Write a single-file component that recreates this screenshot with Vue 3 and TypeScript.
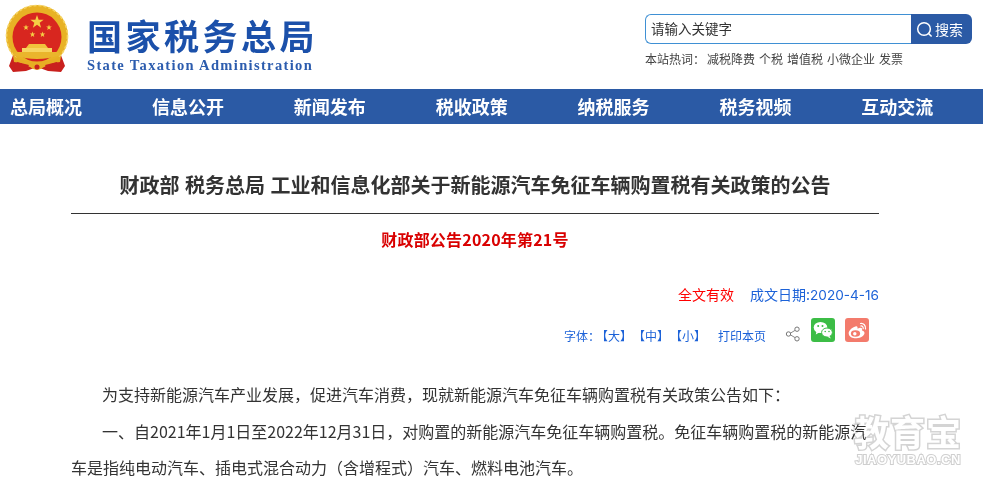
<template>
  <div class="page">
    <header class="head">
      <div class="brand">
        <svg class="emblem" viewBox="0 0 72 74" width="72" height="74">
          <path d="M14 46 L8 62 L12 68 L25 67 L36 63 L47 67 L60 68 L64 62 L58 46 Z" fill="#c9211e" />
          <circle cx="36" cy="32" r="31" fill="#e8b225" />
          <circle cx="36" cy="32" r="30.500" fill="none" stroke="#f6d563" stroke-width="1.600" stroke-dasharray="3 2" />
          <circle cx="36" cy="33" r="24.500" fill="#d8261f" />
          <polygon v-for="(s, i) in stars" :key="i" :points="starPoints(s.x, s.y, s.r)" fill="#f5cf45" />
          <path d="M28 40 h16 l3 4 h-22 Z" fill="#f1c23c" />
          <path d="M21 44 h30 v4 h-30 Z" fill="#f7d560" />
          <path d="M15 48 h42 l3 3 q-24 8 -48 0 Z" fill="#eab52c" />
          <path d="M12 52 q24 12 48 0 l-1 6 q-10 1 -16 5 q-7 6 -14 0 q-6 -4 -16 -5 Z" fill="#e7ae24" />
          <path d="M16 58 L12 67 L25 66 L28 61 Z M56 58 L60 67 L47 66 L44 61 Z" fill="#c9211e" />
          <circle cx="36" cy="63" r="2.500" fill="#c9211e" />
        </svg>
        <div class="brand-text">
          <div class="brand-cn">国家税务总局</div>
          <div class="brand-en">State Taxation Administration</div>
        </div>
      </div>
      <div class="search-wrap">
        <div class="search">
          <div class="search-input">请输入关键字</div>
          <button class="search-btn">
            <svg viewBox="0 0 18 18" width="17" height="17">
              <circle cx="8.500" cy="8.500" r="6.700" fill="none" stroke="#fff" stroke-width="1.600" />
              <path d="M13.300 13.300 L16.500 16.500" stroke="#fff" stroke-width="1.600" />
            </svg>
            <span>搜索</span>
          </button>
        </div>
        <div class="hot">
          <span class="hot-label">本站热词：</span>
          <span v-for="w in hotWords" :key="w" class="hot-word">{{ w }}</span>
        </div>
      </div>
    </header>

    <nav class="nav">
      <a v-for="n in navItems" :key="n" class="nav-item">{{ n }}</a>
    </nav>

    <main class="article">
      <h1 class="title">财政部 税务总局 工业和信息化部关于新能源汽车免征车辆购置税有关政策的公告</h1>
      <div class="doc-no">财政部公告2020年第21号</div>
      <div class="status">
        <span class="valid">全文有效</span>
        <span class="date">成文日期:<span class="date-num">2020-4-16</span></span>
      </div>
      <div class="tools">
        <span class="font-label">字体：</span>
        <span class="sizes"><a>【大】</a><a>【中】</a><a>【小】</a></span>
        <a class="print">打印本页</a>
        <svg class="share" viewBox="0 0 16 16" width="16" height="16">
          <path d="M4 8 L11.500 3.500 M4 8 L11.500 12.500" stroke="#8a8a8a" stroke-width="1" fill="none" />
          <circle cx="3.500" cy="8" r="2.200" fill="#fff" stroke="#777" />
          <circle cx="12" cy="3.200" r="2.200" fill="#fff" stroke="#777" />
          <circle cx="12" cy="12.800" r="2.200" fill="#fff" stroke="#777" />
        </svg>
        <span class="social wechat">
          <svg viewBox="0 0 24 24" width="24" height="24">
            <ellipse cx="9.500" cy="9.500" rx="6.800" ry="5.600" fill="#fff" />
            <path d="M5.500 13 L4.800 16.500 L9 14 Z" fill="#fff" />
            <ellipse cx="16" cy="14.500" rx="5.400" ry="4.500" fill="#fff" stroke="#3cbd46" stroke-width="1" />
            <path d="M18.500 18 L19.800 20.500 L16 18.500 Z" fill="#fff" />
            <circle cx="7.200" cy="8" r="1" fill="#3cbd46" />
            <circle cx="11.500" cy="8" r="1" fill="#3cbd46" />
            <circle cx="14.200" cy="13.500" r="0.800" fill="#3cbd46" />
            <circle cx="18" cy="13.500" r="0.800" fill="#3cbd46" />
          </svg>
        </span>
        <span class="social weibo">
          <svg viewBox="0 0 24 24" width="24" height="24">
            <path d="M10.500 8.500 C6.500 9.500 3.500 13 3.700 15.500 C4 19 8 20.500 11.500 20.300 C16 20 19.500 17.500 19.500 15 C19.500 13.500 18 12.800 17 12.500 C17.500 11 17 9.500 15 9.800 C14 10 13 10.500 12.500 10.800 C12.800 9 12.300 8 10.500 8.500 Z" fill="#fff" />
            <ellipse cx="10.500" cy="15.500" rx="4.600" ry="3.300" fill="#f37b6c" />
            <circle cx="9.800" cy="15.800" r="1.700" fill="#fff" />
            <path d="M15.500 5.500 C18.500 5 21 7.500 20.500 11 M15.800 8 C17.300 7.800 18.500 9 18.200 10.700" stroke="#fff" stroke-width="1.200" fill="none" stroke-linecap="round" />
          </svg>
        </span>
      </div>
      <div class="body-text">
        <p>为支持新能源汽车产业发展，促进汽车消费，现就新能源汽车免征车辆购置税有关政策公告如下：</p>
        <p>一、自2021年1月1日至2022年12月31日，对购置的新能源汽车免征车辆购置税。免征车辆购置税的新能源汽车是指纯电动汽车、插电式混合动力（含增程式）汽车、燃料电池汽车。</p>
      </div>
    </main>

    <div class="watermark">
      <div class="wm-cn">教育宝</div>
      <div class="wm-en">JIAOYUBAO.CN</div>
    </div>
  </div>
</template>

<script setup lang="ts">
const navItems = ['总局概况', '信息公开', '新闻发布', '税收政策', '纳税服务', '税务视频', '互动交流']
const hotWords = ['减税降费', '个税', '增值税', '小微企业', '发票']
const stars = [
  { x: 36, y: 18, r: 7 },
  { x: 25, y: 23.500, r: 3 },
  { x: 48, y: 23.500, r: 3 },
  { x: 31.500, y: 30.500, r: 3 },
  { x: 41.500, y: 30.500, r: 3 },
]

function starPoints(cx: number, cy: number, r: number) {
  const pts: string[] = []
  for (let i = 0; i < 10; i++) {
    const rad = i % 2 ? r * 0.4 : r
    const a = (Math.PI / 5) * i - Math.PI / 2
    pts.push(`${(cx + rad * Math.cos(a)).toFixed(2)},${(cy + rad * Math.sin(a)).toFixed(2)}`)
  }
  return pts.join(' ')
}
</script>

<style>
html, body { margin: 0; background: #fff; overflow: hidden; }
</style>

<style scoped>
.page {
  position: relative;
  width: 983px;
  height: 486px;
  overflow: hidden;
  font-family: "Noto Sans CJK SC", "Open Sans", sans-serif;
  color: #333;
}

/* header */
.head {
  height: 89px;
  display: flex;
  justify-content: space-between;
  padding: 4px 11px 0 1px;
  box-sizing: border-box;
}
.brand { display: flex; gap: 15px; }
.emblem { flex: none; }
.brand-text { padding-top: 9px; margin-left: -1px; }
.brand-cn {
  font-size: 35px;
  line-height: 44px;
  font-weight: 700;
  letter-spacing: 3.500px;
  color: #1b50aa;
  white-space: nowrap;
}
.brand-en {
  font-family: "Liberation Serif", serif;
  font-size: 14.500px;
  line-height: 16px;
  font-weight: 700;
  letter-spacing: 1.350px;
  color: #2c5cae;
  white-space: nowrap;
}
.search-wrap { width: 327px; padding-top: 10px; }
.search { display: flex; height: 30px; }
.search-input {
  flex: 1;
  border: 1px solid #3f90d4;
  border-right: 0;
  border-radius: 6px 0 0 6px;
  padding-left: 5px;
  font-size: 13.500px;
  line-height: 26px;
  color: #333;
}
.search-btn {
  width: 61px;
  border: 0;
  padding: 0 0 0 5px;
  display: flex;
  align-items: center;
  gap: 2px;
  background: #2b5aa5;
  border-radius: 0 6px 6px 0;
  color: #fff;
  font: inherit;
  font-size: 14px;
}
.hot {
  margin-top: 5px;
  font-size: 12px;
  line-height: 20px;
  color: #444;
  white-space: nowrap;
}
.hot-label { margin-right: 2px; }
.hot-word { margin-right: 4px; }

/* nav */
.nav {
  height: 35px;
  background: #2b5aa5;
  display: flex;
  overflow: hidden;
}
.nav-item {
  flex: none;
  width: 141.900px;
  padding-left: 10px;
  box-sizing: border-box;
  font-size: 18px;
  line-height: 35px;
  font-weight: 700;
  color: #fff;
  white-space: nowrap;
}

/* article */
.article { width: 808px; margin-left: 71px; }
.title {
  margin: 0;
  height: 90px;
  box-sizing: border-box;
  padding-top: 46px;
  border-bottom: 1px solid #333;
  font-size: 20px;
  line-height: 30px;
  font-weight: 700;
  word-spacing: 1px;
  text-align: center;
  white-space: nowrap;
}
.doc-no {
  margin-top: 14px;
  font-size: 16px;
  line-height: 22px;
  font-weight: 700;
  letter-spacing: 0.200px;
  color: #d90000;
  text-align: center;
}
.status {
  margin-top: 33px;
  display: flex;
  justify-content: flex-end;
  gap: 16px;
  font-size: 14px;
  line-height: 22px;
  color: #1c62d8;
}
.date-num { font-family: "Inter", sans-serif; font-size: 13.600px; }
.valid { color: #f00; }
.tools {
  margin-top: 9px;
  height: 30px;
  display: flex;
  align-items: center;
  justify-content: flex-end;
  padding-right: 10px;
  font-size: 12px;
  color: #1c62d8;
}
.font-label { margin-right: 2px; padding-top: 10px; font-feature-settings: "halt"; }
.sizes { display: flex; padding-top: 10px; }
.sizes a { width: 37px; }
.print { margin-left: 11px; margin-right: 19px; padding-top: 10px; }
.share { margin-right: 10px; margin-top: 8px; }
.social {
  width: 24px;
  height: 24px;
  border-radius: 3px;
  display: block;
}
.social svg { display: block; }
.wechat { background: #3cbd46; margin-right: 10px; }
.weibo { background: #f37b6c; }
.body-text { margin-top: 31px; }
.body-text p {
  margin: 0;
  font-size: 16px;
  line-height: 36.500px;
  text-indent: 31px;
  color: #333;
}

/* site watermark on top of the screenshot: hollow letters */
.watermark {
  position: absolute;
  left: 853px;
  top: 410px;
  width: 110px;
  text-align: center;
  color: #fff;
  paint-order: stroke fill;
  mix-blend-mode: multiply;
  -webkit-text-stroke: 3px #d4d4d4;
}
.wm-cn { font-size: 35px; line-height: 42px; font-weight: 700; letter-spacing: 1px; white-space: nowrap; }
.wm-en { font-family: "Liberation Sans", sans-serif; font-size: 13px; line-height: 16px; font-weight: 700; letter-spacing: 0.500px; white-space: nowrap; -webkit-text-stroke: 2px #cfcfcf; }
</style>
